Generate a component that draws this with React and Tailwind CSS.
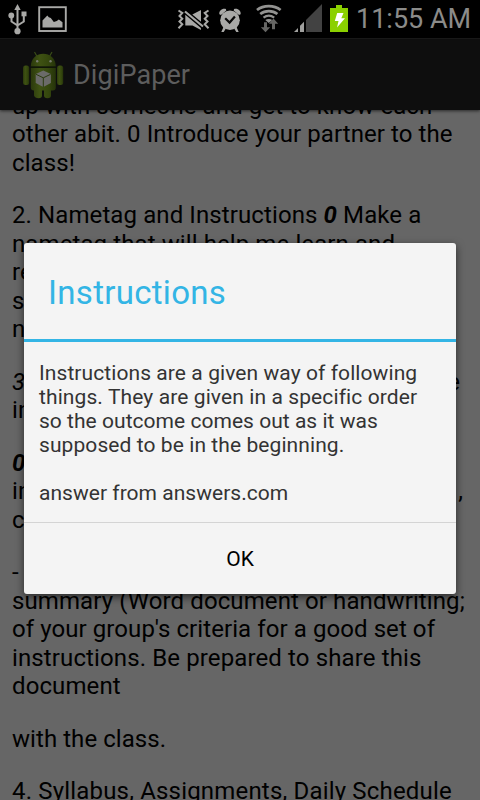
function Line({ children, className = "" }) {
  return <div className={`h-[28.5px] whitespace-pre ${className}`}>{children}</div>;
}

function StatusBar() {
  return (
    <header className="flex h-[38px] shrink-0 bg-black">
      <svg className="h-[38px] w-[352px] shrink-0" viewBox="0 0 352 38">
        {/* usb */}
        <g stroke="#a9a9a7" strokeWidth="2" fill="none">
          <path d="M17.5 8v23M11.5 16v5.500l6 4M23.800 15v6.500l-6.300 4" />
        </g>
        <g fill="#a9a9a7">
          <path d="M17.500 4l3.200 6h-6.400z" />
          <circle cx="11.300" cy="15.500" r="2.900" />
          <rect x="21.500" y="11.500" width="5" height="4.800" />
          <circle cx="17.500" cy="31.200" r="3.100" />
        </g>
        {/* picture */}
        <rect x="39.200" y="7.200" width="26.600" height="23.800" fill="none" stroke="#a9a9a7" strokeWidth="1.900" />
        <path d="M42.500 27.500v-7l4.800-5 1.500 1.800 2 .8 3 4 3-1 2-1.500 3.700 2.700v5.200z" fill="#a9a9a7" />
        {/* vibrate, muted */}
        <g fill="none" stroke="#a9a9a7" strokeWidth="2">
          <path d="M178.500 10.500l3.800 2.500-2.800 3 2.800 2.700-2.800 2.800 2.800 2.700-3.800 4" />
          <path d="M208.500 10.500l-3.800 2.500 2.800 3-2.800 2.700 2.800 2.800-2.800 2.700 3.800 4" />
          <path d="M185 11.500l18 15" strokeWidth="2.200" />
        </g>
        <path d="M185.300 14.800l15.600 13.200v2l-8.400-4.500h-7.200zM192.300 14.500l8.700-4.500v11.700z" fill="#a9a9a7" />
        {/* alarm */}
        <g fill="#a9a9a7">
          <circle cx="230" cy="20.300" r="9.800" />
          <path d="M219.400 14.300c-.8-3.500 3-6.500 6.500-5.300l.4 1.500-5.300 4.500zM240.600 14.300c.8-3.500-3-6.500-6.500-5.300l-.4 1.500 5.300 4.500z" />
          <path d="M223.500 27l2.200 1.800-2 3.200h-2.400zM236.500 27l-2.200 1.800 2 3.200h2.400z" />
        </g>
        <path d="M225.200 18.300l4.400 4.300 5.300-6" fill="none" stroke="#080808" strokeWidth="2.200" />
        {/* wifi */}
        <g fill="none" stroke="#929290" strokeWidth="2.800">
          <path d="M257 10c6.500-5.200 17-5.200 23.600 0" />
          <path d="M260.200 14c5-3.800 12.300-3.800 17.200 0" />
          <path d="M263.500 17.600c3.300-2.400 7.400-2.400 10.700 0" strokeWidth="2.300" />
        </g>
        <path d="M265.300 20c2-1.400 5-1.400 7 0l-3.500 3z" fill="#929290" />
        <path d="M264 22.200h3v5h3.200l-4.700 5-4.700-5h3.200zM273.500 18.500l4.700 5.200h-3.200v5.500h-3v-5.500h-3.200z" fill="#666664" />
        {/* signal */}
        <path d="M294 32l4-4v4zM300 32v-6.200l4-4V32z" fill="#a0a09e" />
        <path d="M306 32V20l16-16v28z" fill="#424242" />
        {/* battery */}
        <path d="M336 5h6v3h6v24h-18V8h6z" fill="#8bd000" />
        <path d="M337.200 13h6.300l-2.200 5.300h3.700l-8 9.200 1.500-6.500h-3.700z" fill="#fff" />
      </svg>
      <div className="pl-[4px] text-[27px] leading-[39px] whitespace-pre text-[#8b8b89]">11:55 AM</div>
    </header>
  );
}

function ActionBar() {
  return (
    <div className="relative z-10 flex h-[72px] shrink-0 items-center border-t border-[#181818] bg-[#0e0e0e] shadow-[0_1px_3px_rgba(0,0,0,0.6)]">
      <svg className="ml-[20px] h-[72px] w-[46px]" viewBox="20 38 46 72">
        <defs>
          <linearGradient id="robot" x1="0" y1="0" x2="1" y2="0">
            <stop offset="0" stopColor="#2b390c" />
            <stop offset=".35" stopColor="#3f5213" />
            <stop offset=".7" stopColor="#35470e" />
            <stop offset="1" stopColor="#25330a" />
          </linearGradient>
        </defs>
        <path d="M34.500 51l2.300 4M52 51l-2.300 4" stroke="#3a4d18" strokeWidth="1.200" />
        <g fill="url(#robot)">
          <path d="M30.800 65.500c0-17 25-17 25 0z" />
          <path d="M30.800 67h25v19.500q0 3-3 3H51v5q0 2.800-3.500 2.800T44 94.500v-5h-2v5q0 2.800-3.500 2.800T34 94.500v-5q-3.200 0-3.200-3z" />
          <rect x="23" y="64.500" width="6.200" height="19.500" rx="2.500" />
          <rect x="57" y="64.500" width="6.200" height="19.500" rx="2.500" />
        </g>
        <path d="M31 66.200h24.800" stroke="#121b05" strokeWidth="1" />
        <circle cx="37.200" cy="60.300" r="1.200" fill="#777b70" />
        <circle cx="50.500" cy="60.300" r="1.200" fill="#777b70" />
        <path d="M43.300 69.500l7.600 3.400v9L43.300 86l-7.600-4.100v-9z" fill="#6b6b69" />
        <path d="M36 73.300l7.300 3.500 7.300-3.500M43.300 76.800V86" fill="none" stroke="#2c3c10" strokeWidth="1" />
      </svg>
      <h1 className="ml-[7px] text-[27px] leading-[36px] tracking-[0.1px] whitespace-pre text-[#5d5d5d]">DigiPaper</h1>
    </div>
  );
}

function Handout() {
  return (
    <main className="-mt-[18.4px] flex flex-col gap-[24px] pl-[12px] text-[24px] leading-[28.5px] tracking-[0.1px] text-black">
      <div>
        <Line>up with someone and get to know each</Line>
        <Line className="tracking-[0.08px]">other abit. 0 Introduce your partner to the</Line>
        <Line>class!</Line>
      </div>
      <div>
        <Line>2. Nametag and Instructions <b><i>0</i></b> Make a</Line>
        <Line>nametag that will help me learn and</Line>
        <Line>re</Line>
        <Line>s</Line>
        <Line>n</Line>
      </div>
      <div>
        <Line className="flex w-[448px] justify-between"><i>3</i><span>e</span></Line>
        <Line>in</Line>
      </div>
      <div>
        <Line><b><i>0</i></b></Line>
        <Line className="flex w-[451px] justify-between"><span>in</span><span>,</span></Line>
        <Line>c</Line>
      </div>
      <div>
        <Line>-</Line>
        <Line>summary (Word document or handwriting;</Line>
        <Line className="tracking-[0.08px]">of your group's criteria for a good set of</Line>
        <Line className="tracking-[0.12px]">instructions. Be prepared to share this</Line>
        <Line>document</Line>
      </div>
      <Line className="tracking-[0.06px]">with the class.</Line>
      <Line className="tracking-[0.18px]">4. Syllabus, Assignments, Daily Schedule</Line>
    </main>
  );
}

function InstructionsDialog() {
  return (
    <section role="dialog" className="absolute top-[243px] left-[24px] z-20 flex h-[351px] w-[432px] flex-col rounded-[3px] bg-[#f4f4f4] shadow-[0_3px_9px_rgba(0,0,0,0.6)]">
      <h2 className="h-[99px] border-b-[3px] border-[#33b5e5] pl-[24px] text-[33px] leading-[100px] tracking-[0.3px] whitespace-pre text-[#33b5e5]">Instructions</h2>
      <div className="h-[181px] border-b border-[#d4d4d4] pt-[19px] pl-[15px] text-[21px] leading-[24px] tracking-[0.08px] whitespace-pre text-[#333]">
        <p>Instructions are a given way of following</p>
        <p className="tracking-[0.1px]">things. They are given in a specific order</p>
        <p className="tracking-[0.03px]">so the outcome comes out as it was</p>
        <p>supposed to be in the beginning.</p>
        <p className="mt-[24px] tracking-[0.03px]">answer from answers.com</p>
      </div>
      <button className="flex-1 pt-[2px] text-[21px] text-black">OK</button>
    </section>
  );
}

export default function App() {
  return (
    <div className="relative flex h-[800px] w-[480px] flex-col overflow-hidden bg-[#666] font-[Roboto,sans-serif]">
      <StatusBar />
      <ActionBar />
      <Handout />
      <InstructionsDialog />
    </div>
  );
}
